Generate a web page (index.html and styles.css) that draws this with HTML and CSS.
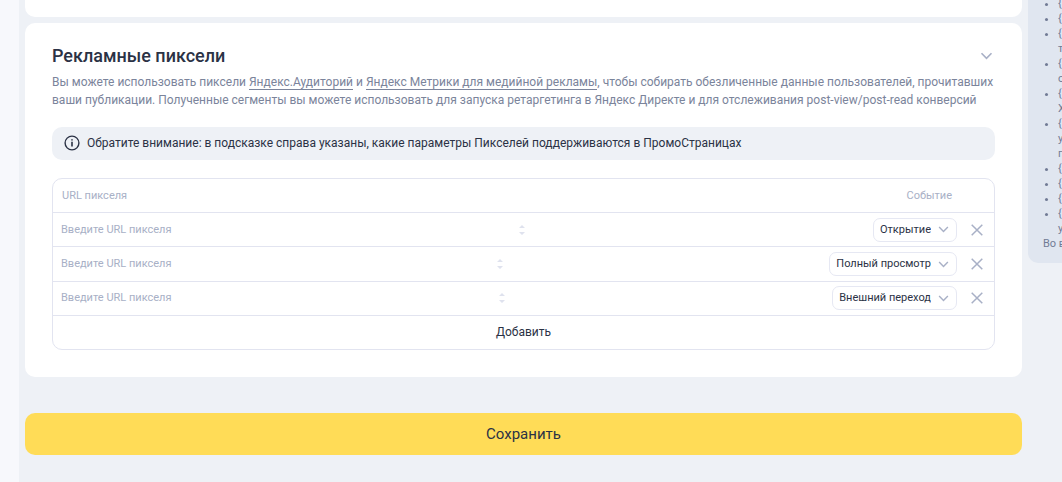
FILE: index.html
```html
<!DOCTYPE html>
<html lang="ru">
<head>
<meta charset="utf-8">
<meta name="viewport" content="width=device-width, initial-scale=1">
<title>Рекламные пиксели</title>
<link rel="stylesheet" href="styles.css">
</head>
<body>
<svg class="sprite" aria-hidden="true">
  <symbol id="chevron" viewBox="0 0 12 8"><path d="M1 1.2 6 6.4 11 1.2" fill="none" stroke="currentColor" stroke-width="1.6"/></symbol>
  <symbol id="cross" viewBox="0 0 12 12"><path d="M.7.7 11.3 11.3M11.3.7.7 11.3" fill="none" stroke="currentColor" stroke-width="1.5"/></symbol>
  <symbol id="sort" viewBox="0 0 6 10"><path d="M3 0 6 3H0ZM0 7H6L3 10Z" fill="currentColor"/></symbol>
</svg>
<div class="page">
  <div class="rail"></div>
  <main class="content">
    <section class="card card-previous"></section>
    <section class="card">
      <header class="card-head">
        <h2 class="title">Рекламные пиксели</h2>
        <button class="icon-button" type="button" aria-label="Свернуть"><svg class="chevron"><use href="#chevron"/></svg></button>
      </header>
      <p class="lead">Вы можете использовать пиксели <a class="link" href="#">Яндекс.Аудиторий</a> и <a class="link" href="#">Яндекс Метрики для медийной рекламы</a>, чтобы собирать обезличенные данные пользователей, прочитавших ваши публикации. Полученные сегменты вы можете использовать для запуска ретаргетинга в Яндекс Директе и для отслеживания post-view/post-read конверсий</p>
      <div class="notice">
        <svg class="info" viewBox="0 0 16 16" aria-hidden="true"><circle cx="8" cy="8" r="6.9" fill="none" stroke="currentColor" stroke-width="1.4"/><path d="M8 6.8V11.4M8 4.2V5.6" stroke="currentColor" stroke-width="1.6"/></svg>
        <span>Обратите внимание: в подсказке справа указаны, какие параметры Пикселей поддерживаются в ПромоСтраницах</span>
      </div>
      <table class="pixels">
        <thead class="group">
          <tr class="row row-head"><th class="head">URL пикселя</th><th class="head">Событие</th></tr>
        </thead>
        <tbody class="group">
          <tr class="row">
            <td class="url"><input class="url-input" type="text" placeholder="Введите URL пикселя" aria-label="URL пикселя 1"><span class="handle"><svg class="sort"><use href="#sort"/></svg></span></td>
            <td class="event"><span class="picker"><select class="select" aria-label="Событие 1"><option>Открытие</option></select><svg class="chevron chevron-small"><use href="#chevron"/></svg></span></td>
            <td class="remove"><button class="icon-button" type="button" aria-label="Удалить"><svg class="cross"><use href="#cross"/></svg></button></td>
          </tr>
          <tr class="row">
            <td class="url"><input class="url-input" type="text" placeholder="Введите URL пикселя" aria-label="URL пикселя 2"><span class="handle"><svg class="sort"><use href="#sort"/></svg></span></td>
            <td class="event"><span class="picker"><select class="select" aria-label="Событие 2"><option>Полный просмотр</option></select><svg class="chevron chevron-small"><use href="#chevron"/></svg></span></td>
            <td class="remove"><button class="icon-button" type="button" aria-label="Удалить"><svg class="cross"><use href="#cross"/></svg></button></td>
          </tr>
          <tr class="row">
            <td class="url"><input class="url-input" type="text" placeholder="Введите URL пикселя" aria-label="URL пикселя 3"><span class="handle"><svg class="sort"><use href="#sort"/></svg></span></td>
            <td class="event"><span class="picker"><select class="select" aria-label="Событие 3"><option>Внешний переход</option></select><svg class="chevron chevron-small"><use href="#chevron"/></svg></span></td>
            <td class="remove"><button class="icon-button" type="button" aria-label="Удалить"><svg class="cross"><use href="#cross"/></svg></button></td>
          </tr>
        </tbody>
        <tfoot class="group">
          <tr class="row"><td class="add-cell"><button class="add" type="button">Добавить</button></td></tr>
        </tfoot>
      </table>
    </section>
    <button class="save" type="button">Сохранить</button>
  </main>
  <aside class="hint">
    <ul class="hint-list">
      <li>{</li><li>{</li><li>{<br>т</li><li>{<br>о</li><li>{<br>Х</li><li>{<br>у<br>п</li><li>{</li><li>{</li><li>{</li><li>{<br>у</li>
    </ul>
    <p class="hint-text">Во в</p>
  </aside>
</div>
</body>
</html>
```
FILE: styles.css
```css
* { box-sizing: border-box; }
body {
  margin: 0;
  background: #eef1f6;
  color: #2b3245;
  font: 12px/18px Roboto, "Noto Sans", sans-serif;
}
button, input, select { font: inherit; color: inherit; margin: 0; padding: 0; border: 0; background: none; }
.sprite { display: none; }
.page { display: flex; align-items: flex-start; gap: 6px; min-height: 100vh; overflow: hidden; }
.rail { flex: none; align-self: stretch; width: 19px; background: #f7f8fc; }
.content { flex: 1; min-width: 0; display: flex; flex-direction: column; gap: 6px; }
.card { padding: 20px 27px 27px 27px; border-radius: 10px; background: #fff; }
.card-previous { height: 17px; padding: 0; border-radius: 0 0 10px 10px; }
.card-head { display: flex; align-items: center; justify-content: space-between; }
.title { margin: 0; font-size: 18px; line-height: 26px; font-weight: 500; }
.icon-button { display: flex; align-items: center; justify-content: center; width: 18px; height: 18px; color: #a8b0c6; }
.chevron { width: 13px; height: 8px; }
.lead { margin: 4px 0 18px; color: #7b849b; }
.link { color: inherit; text-decoration: none; border-bottom: 1px solid currentColor; }
.notice { display: flex; align-items: center; gap: 7px; padding: 7px 12px 8px; border-radius: 10px; background: #eef1f6; }
.info { flex: none; width: 16px; height: 16px; }
.pixels { display: flex; flex-direction: column; min-height: 172px; margin-top: 18px; border: 1px solid #e2e4f0; border-radius: 10px; font-size: 11px; }
.group { display: contents; }
.row { flex: 1 0 34px; display: flex; align-items: center; border-top: 1px solid #e2e4f0; }
.row-head { flex-basis: 33px; justify-content: space-between; padding: 0 42px 0 9px; border-top: 0; color: #a8b0c6; }
.head { padding: 0; font-weight: 400; }
.url { flex: 1; display: flex; align-items: center; padding: 0 0 0 8px; }
.url-input { field-sizing: content; outline: 0; }
.url-input::placeholder { color: #a8b0c6; opacity: 1; }
.handle { flex: 1; display: flex; justify-content: center; }
.sort { width: 6px; height: 10px; color: #dfe2ee; }
.event { padding: 0; }
.picker { position: relative; display: flex; align-items: center; }
.select { appearance: none; field-sizing: content; height: 24px; padding: 0 25px 0 6px; border: 1px solid #e6e8f3; border-radius: 7px; }
.chevron-small { position: absolute; right: 8px; width: 11px; height: 7px; color: #a8b0c6; pointer-events: none; }
.remove { padding: 0 8px 0 11px; }
.cross { width: 12px; height: 12px; }
.add-cell { flex: 1; padding: 0; }
.add { display: block; width: 100%; font-size: 12px; }
.save { height: 42px; margin-top: 30px; border-radius: 10px; background: #ffdc57; font-size: 15px; }
.hint { flex: none; width: 34px; padding: 0 0 12px 15px; overflow: hidden; white-space: nowrap; border-radius: 0 0 0 10px; background: #e0e6f0; color: #717b95; font-size: 11px; line-height: 15px; }
.hint-list { margin: -4px 0 0; padding: 0 0 0 15px; }
.hint-text { margin: 0; }
```
